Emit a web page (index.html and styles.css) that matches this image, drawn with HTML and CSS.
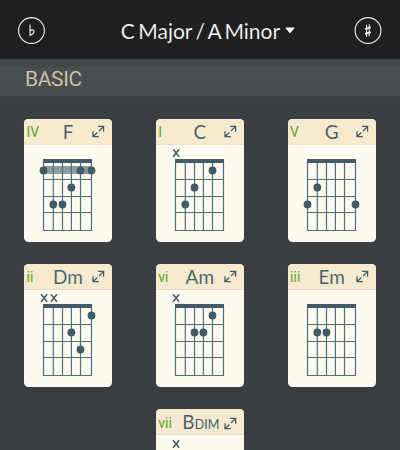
FILE: index.html
```html
<!DOCTYPE html>
<html lang="en">
<head>
<meta charset="utf-8">
<title>Chords</title>
<link rel="stylesheet" href="styles.css">
</head>
<body>
<header class="topbar">
  <button class="key" aria-label="Flat"><svg width="28" height="28" viewBox="0 0 28 28"><circle cx="13.5" cy="13.5" r="12.9"/><path d="M12 7.6V18.6M12 14C13.5 12.4 16.3 12.5 16.1 14.6C15.9 16.4 13.8 17.6 12 18.6"/></svg></button>
  <h1 class="title"><span class="title-text">C Major / A Minor</span><svg width="10" height="7" viewBox="0 0 10 7"><path class="caret" d="M1 .5H9Q9.8.5 9.2 1.4L5.6 5.8Q5 6.5 4.4 5.8L.8 1.4Q.2.5 1 .5Z"/></svg></h1>
  <button class="key" aria-label="Sharp"><svg width="28" height="28" viewBox="0 0 28 28"><circle cx="14" cy="13.5" r="12.9"/><path d="M12.6 7.8V19.8M15.2 7.2V19.2"/><path class="bar" d="M11 12L16.8 10.4M11 16.8L16.8 15.2"/></svg></button>
</header>
<h2 class="section">BASIC</h2>
<main class="chords" id="chords"></main>
<script src="chords.js"></script>
</body>
</html>
```
FILE: styles.css
```css
* { box-sizing: border-box; }
body { margin: 0; height: 450px; overflow: hidden; background: #3a3e41; font-family: Lato, "Liberation Sans", sans-serif; }
.topbar { height: 59px; padding: 2px 18px 0; display: flex; align-items: center; justify-content: space-between; background: #1f1f1f; color: #fff; }
.key { width: 28px; height: 28px; padding: 0; border: 0; background: none; display: block; }
.key svg { display: block; }
.key svg * { fill: none; stroke: #f0f0f0; stroke-width: 1.1; }
.key .bar { stroke-width: 1.8; }
.title { margin: 0; padding-left: 16px; display: flex; align-items: center; gap: 5px; font-size: 21px; font-weight: 400; line-height: 28px; white-space: pre; }
.title svg { margin-top: -1px; }
.title-text { word-spacing: -2px; -webkit-text-stroke: .2px #1f1f1f; }
.caret { fill: #fff; }
.section { margin: 0; height: 38px; padding: 1px 0 0 25px; background: linear-gradient(#414648 0, #42474a 7px, #494e51 9px, #474c4f 37px, #3d4245 37px); color: #d8cbae; font: 400 21px/38px Roboto, sans-serif; letter-spacing: -.35px; -webkit-text-stroke: .15px #484d50; }
.chords { height: 353px; overflow: hidden; padding: 21.5px 24px 0; display: grid; grid-template-columns: 88px 88px 88px; grid-auto-rows: 123px; align-content: start; column-gap: 43.8px; row-gap: 22px; }
.card { height: 123px; border-radius: 4.5px; overflow: hidden; background: #fffaf0; color: #405c67; }
.card.center { grid-column: 2; }
.card.center .chart { margin-top: 1px; }
.head { height: 26.5px; display: grid; grid-template-columns: 18px 47px 13px; align-items: center; padding-left: 2.5px; background: #f5e9d0; border-bottom: 1px solid #f0dcc2; }
.degree { color: #5ca51c; font: 400 14px/26px Roboto, sans-serif; white-space: nowrap; }
.name { text-align: center; font-size: 19px; line-height: 26px; white-space: nowrap; -webkit-text-stroke: .12px #f5e9d0; }
.card.center .name { padding-left: 2px; }
.name small { font-size: 12.5px; -webkit-text-stroke: 0; }
.expand { fill: none; stroke: #405c67; stroke-width: 1.3; margin-left: .5px; }
.chart { display: block; fill: #405c67; }
.grid { fill: none; stroke: #4e707d; stroke-width: 1.2; }
.barre { fill: #405c67; opacity: .6; }
.mute { fill: none; stroke: #405c67; stroke-width: 1.5; }
```
FILE: chords.js
```js
const strings = [19.5, 29.3, 38.5, 47.4, 56.5, 67.5];
const rows = [25.5, 42.5, 59.5];

// Dots are [string, fret] pairs; muted strings are listed by index.
const chords = [
  { degree: 'IV', name: 'F', barre: true, dots: [[0, 0], [4, 0], [5, 0], [3, 1], [1, 2], [2, 2]], mute: [] },
  { degree: 'I', name: 'C', dots: [[4, 0], [2, 1], [1, 2]], mute: [0] },
  { degree: 'V', name: 'G', dots: [[1, 1], [0, 2], [5, 2]], mute: [] },
  { degree: 'ii', name: 'Dm', dots: [[5, 0], [3, 1], [4, 2]], mute: [0, 1] },
  { degree: 'vi', name: 'Am', dots: [[4, 0], [2, 1], [3, 1]], mute: [0] },
  { degree: 'iii', name: 'Em', dots: [[1, 1], [2, 1]], mute: [] },
  { degree: 'vii', name: 'B<small>DIM</small>', dots: [], mute: [0], center: true }
];

const card = c => `<article class="card${c.center ? ' center' : ''}">
  <div class="head"><span class="degree">${c.degree}</span><span class="name">${c.name}</span>
    <svg class="expand" width="13" height="13" viewBox="0 0 13 13"><path d="M1.2 11.4L5.4 7.6M7 6L11.4 1.6M6 1.4H11.6V6.8M1 6.2V11.6H6.8"/></svg></div>
  <svg class="chart" width="88" height="96" viewBox="0 0 88 96">
    ${c.barre ? '<rect class="barre" x="19" y="21" width="48" height="8"/>' : ''}
    <path class="grid" d="${strings.map(x => `M${x} 17V86`).join('')}M19 34.5H68M19 51.5H68M19 67.5H68M19 85.5H68"/>
    <rect x="19" y="14" width="49" height="4"/>
    ${c.dots.map(([s, f]) => `<circle cx="${strings[s]}" cy="${rows[f]}" r="3.9"/>`).join('')}
    ${c.mute.map(s => `<path class="mute" d="M${strings[s] - 2.4} 4.2l6 7.6m0-7.6l-6 7.6"/>`).join('')}
  </svg></article>`;

document.getElementById('chords').innerHTML = chords.map(card).join('');
```
